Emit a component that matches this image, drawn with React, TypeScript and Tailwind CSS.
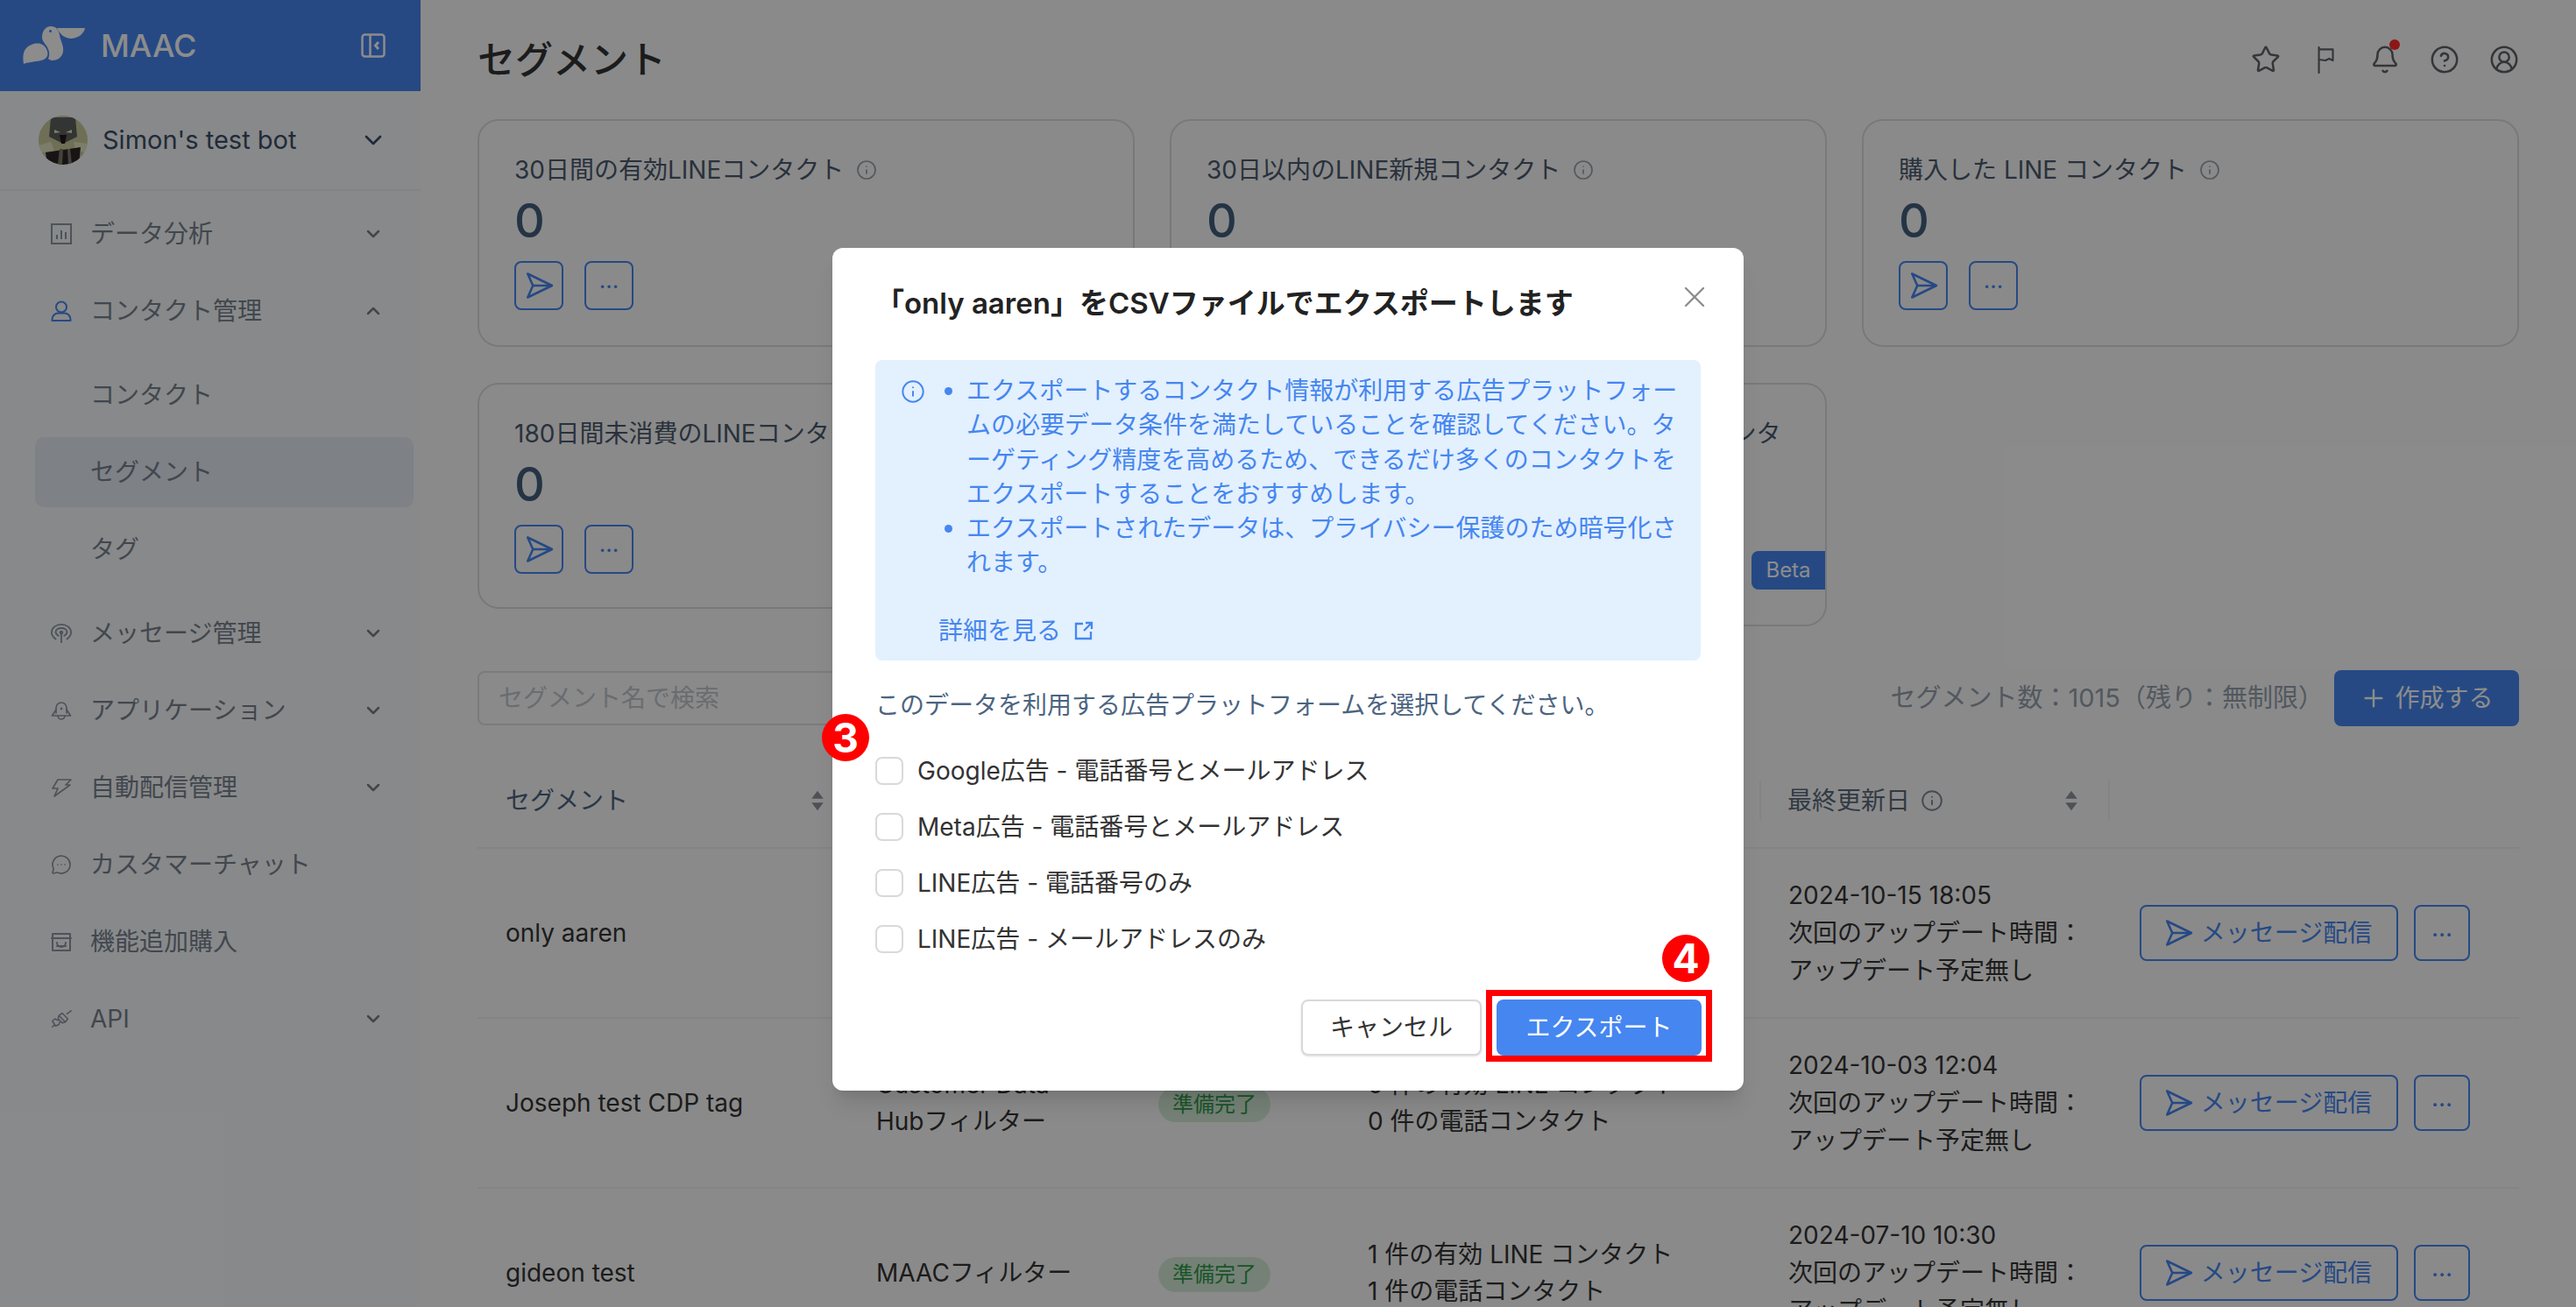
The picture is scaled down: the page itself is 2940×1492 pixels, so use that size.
import React from "react";
import { Bell, ChevronDown, ChevronUp, CircleHelp, CircleUserRound, Info, MessageCircleMore, Plus, Star, X } from "lucide-react";

const IconSend = ({ className }: { className: string }) => (
  <svg viewBox="0 0 24 24" fill="none" stroke="currentColor" strokeWidth="1.7" strokeLinejoin="round" className={className}>
    <path d="M3.500 3 22 12 3.500 21 7.500 12Z" />
    <path d="M7.500 12H22" />
  </svg>
);

const SortIcon = () => (
  <svg viewBox="0 0 16 24" fill="currentColor" className="w-[18px] h-[28px] text-[#8e949c]">
    <path d="M8 2 14 10H2Z" />
    <path d="M2 14H14L8 22Z" />
  </svg>
);

const Logo = () => (
  <svg viewBox="6 10 72 46" fill="white" className="w-[72px] h-[46px]">
    <path d="M7 54C5 42 8 35 16 32C24 29 30 31 33 37C36 43 34 47 30 49C22 52 14 51 7 54Z" />
    <path d="M28 24C28 15 33 11 38 11C44 11 47 15 48 21C49 28 53 33 52 40C51 46 46 50 40 50C37 50 35 48 35 48C38 42 35 36 32 32C30 29 28 27 28 24Z" />
    <path d="M45 13H77C76 20 68 25 61 25C54 25 48 20 45 13Z" />
    <circle cx="37.5" cy="16.5" r="1.5" fill="#4586f0" />
  </svg>
);

const Avatar = () => (
  <svg viewBox="0 0 56 56" className="w-14 h-14 rounded-full shrink-0">
    <rect width="56" height="56" fill="#c9cb9c" />
    <path d="M14 2 42 2 44 24 28 32 12 24Z" fill="#5d5f60" />
    <path d="M18 16 25 19 18 20ZM38 16 31 19 38 20Z" fill="#e4e6c0" />
    <path d="M24 22H32L30 32H26Z" fill="#241416" />
    <path d="M0 34 14 30 18 40 4 42Z" fill="#e4e6c0" />
    <path d="M40 30 56 32 54 42 42 40Z" fill="#e4e6c0" />
    <path d="M8 42 48 36 46 56H10Z" fill="#2c2426" />
    <path d="M24 38H28L27 56H22ZM33 38H36L38 56H34Z" fill="#7d7b6a" />
  </svg>
);

const stroke = { fill: "none", stroke: "currentColor", strokeWidth: 1.7, strokeLinecap: "round", strokeLinejoin: "round" } as const;

const navIcons: Record<string, React.ReactNode> = {
  chart: (
    <svg viewBox="0 0 24 24" {...stroke} strokeLinecap="butt" strokeLinejoin="miter" strokeWidth={2} className="w-6 h-6">
      <rect x="1" y="1" width="22" height="22" />
      <path d="M7 18v-5M12 18V8M17 18v-8" />
    </svg>
  ),
  user: (
    <svg viewBox="0 0 24 24" {...stroke} strokeWidth={2} className="w-6 h-6">
      <circle cx="12" cy="7.5" r="6" />
      <path d="M1.5 23v-1.5a7 7 0 0 1 7-7h7a7 7 0 0 1 7 7V23Z" />
    </svg>
  ),
  signal: (
    <svg viewBox="0 0 26 24" {...stroke} strokeWidth={2} className="w-[26px] h-6">
      <path d="M6 19C2.5 16.5 1 13.500 1 11 1 5 6.500 1 13 1s12 4 12 10c0 2.500-1.500 5.500-5 8" />
      <path d="M9.500 15C7.500 14 6 12.500 6 10.500 6 7.500 9 5.500 13 5.500s7 2 7 5c0 2-1.500 3.500-3.500 4.500" />
      <circle cx="13" cy="11" r="1.500" />
      <path d="M13 12v11" />
    </svg>
  ),
  rocket: (
    <svg viewBox="0 0 24 24" {...stroke} className="w-6 h-6">
      <path d="M6 15V9a6 6 0 0 1 12 0v6" />
      <path d="M6 11 1.500 18H22.500L18 11" />
      <path d="M8 18a4 4 0 0 0 8 0" />
      <circle cx="12" cy="10" r=".6" />
    </svg>
  ),
  bolt: (
    <svg viewBox="0 0 24 24" {...stroke} className="w-6 h-6">
      <path d="M8 3H23L17 9H22L4 22 8 13H2Z" />
    </svg>
  ),
  store: (
    <svg viewBox="0 0 24 24" {...stroke} strokeWidth={2} className="w-6 h-6">
      <path d="M2 8V3h20v5" />
      <path d="M1 8h22M2 8v14h20V8" />
      <path d="M7 13a3 3 0 0 0 10 0M7 17h10" />
    </svg>
  ),
  plug: (
    <svg viewBox="0 0 26 24" {...stroke} className="w-[26px] h-6">
      <path d="M10 8 18 16M14 5 21 12 18 16 14 17 9 12 10 8Z" />
      <path d="M20 6 25 2M9 14 5 12 2 15 6 21 10 19 11 16M2 22 4 20" />
    </svg>
  ),
};

const NavItem = ({ icon, label, open, active }: { icon: React.ReactNode; label: string; open?: boolean; active?: boolean }) => (
  <div className="h-20 flex items-center pl-[58px] pr-[42px] text-[28px] text-[#77828f]">
    <span className={`w-6 flex justify-center ${active ? "text-[#4586f0]" : "text-[#8d97a4]"}`}>{icon}</span>
    <span className="ml-[21px] flex-1">{label}</span>
    {open === true && <ChevronUp className="w-6 h-6 text-[#7a7f86]" strokeWidth={2.5} />}
    {open === false && <ChevronDown className="w-6 h-6 text-[#7a7f86]" strokeWidth={2.5} />}
  </div>
);

const SubItem = ({ label, active }: { label: string; active?: boolean }) => (
  <div className={`h-20 flex items-center ml-10 mr-2 pl-[63px] rounded-[10px] text-[28px] text-[#77828f] ${active ? "bg-[#e6ebf5]" : ""}`}>
    {label}
  </div>
);

const Sidebar = () => (
  <aside className="w-[480px] h-full shrink-0 bg-[#f8fafc]">
    <div className="h-[104px] bg-[#4586f0] flex items-center pl-[26px] pr-[40px] text-white">
      <Logo />
      <span className="ml-[17px] flex-1 text-[36px] font-medium">MAAC</span>
      <svg viewBox="0 0 28 28" fill="none" stroke="currentColor" strokeWidth="2.500" className="w-7 h-7">
        <rect x="1.500" y="1.500" width="25" height="25" rx="3" />
        <path d="M10.500 1.500v25" />
        <path d="M20 10l-3.500 4 3.500 4" strokeWidth="3" />
      </svg>
    </div>
    <div className="h-[114px] border-b-2 border-[#eceef1] flex items-center pl-11 pr-[38px]">
      <Avatar />
      <span className="ml-[17px] flex-1 text-[29px] text-[#3b4f68]">Simon's test bot</span>
      <ChevronDown className="w-8 h-8 text-[#3b4f68]" strokeWidth={2} />
    </div>
    <nav className="pt-[9px] flex flex-col gap-2">
      <NavItem icon={navIcons.chart} label="データ分析" open={false} />
      <NavItem icon={navIcons.user} label="コンタクト管理" open={true} active />
      <div className="my-2 flex flex-col gap-2">
        <SubItem label="コンタクト" />
        <SubItem label="セグメント" active />
        <SubItem label="タグ" />
      </div>
      <NavItem icon={navIcons.signal} label="メッセージ管理" open={false} />
      <NavItem icon={navIcons.rocket} label="アプリケーション" open={false} />
      <NavItem icon={navIcons.bolt} label="自動配信管理" open={false} />
      <NavItem icon={<MessageCircleMore className="w-[26px] h-[26px]" strokeWidth={1.7} />} label="カスタマーチャット" />
      <NavItem icon={navIcons.store} label="機能追加購入" />
      <NavItem icon={navIcons.plug} label="API" open={false} />
    </nav>
  </aside>
);

const SquareButton = ({ children }: { children: React.ReactNode }) => (
  <button className="w-14 h-14 flex items-center justify-center border-2 border-[#4586f0] rounded-[8px] text-[#4586f0]">
    {children}
  </button>
);

const Card = ({ title, className, noInfo, children }: { title: string; className?: string; noInfo?: boolean; children?: React.ReactNode }) => (
  <div className={`relative border-2 border-[#d9dde2] rounded-[24px] pl-[40px] pt-[38px] ${className ?? "h-[260px]"}`}>
    <div className="h-[36px] flex items-center gap-[14px] text-[28px] leading-[36px] text-[#4b5a6e] whitespace-nowrap">
      <span>{title}</span>
      {!noInfo && <Info className="w-6 h-6 text-[#99a2ad]" strokeWidth={1.7} />}
    </div>
    <div className="mt-[15px] h-[48px] flex items-center text-[54px] font-medium text-[#43607f]">0</div>
    <div className="mt-[23px] flex gap-[24px]">
      <SquareButton>
        <IconSend className="w-9 h-9" />
      </SquareButton>
      <SquareButton>
        <span className="text-[26px] leading-none -mt-3">...</span>
      </SquareButton>
    </div>
    {children}
  </div>
);

type Row = { name: string; filter: string; contacts: string[]; date: string };

const rows: Row[] = [
  { name: "only aaren", filter: "MAACフィルター", contacts: ["1 件の有効 LINE コンタクト", "1 件の電話コンタクト"], date: "2024-10-15 18:05" },
  { name: "Joseph test CDP tag", filter: "Customer Data Hubフィルター", contacts: ["0 件の有効 LINE コンタクト", "0 件の電話コンタクト"], date: "2024-10-03 12:04" },
  { name: "gideon test", filter: "MAACフィルター", contacts: ["1 件の有効 LINE コンタクト", "1 件の電話コンタクト"], date: "2024-07-10 10:30" },
];

const tableCols = "grid grid-cols-[423px_322px_239px_479px_400px_1fr]";

const Table = () => (
  <div className="mt-[32px] text-[28px]">
    <div className={`${tableCols} h-[108px] items-center border-b-2 border-[#eef0f3] text-[#4b6480]`}>
      <div className="pl-8 pr-[26px] flex justify-between items-center">
        <span>セグメント</span>
        <SortIcon />
      </div>
      <div className="pl-8">タイプ</div>
      <div className="pl-8">ステータス</div>
      <div className="pl-8">コンタクト</div>
      <div className="h-[46px] pl-[30px] pr-[33px] flex items-center border-x-2 border-[#eef0f3] text-[#5a6a7d]">
        <span>最終更新日</span>
        <Info className="ml-3 w-[26px] h-[26px] text-[#7e8a99]" strokeWidth={1.8} />
        <span className="ml-auto">
          <SortIcon />
        </span>
      </div>
      <div />
    </div>
    {rows.map((row) => (
      <div key={row.name} className={`${tableCols} h-[194px] items-center border-b-2 border-[#eef0f3] text-[#333333] leading-[42px]`}>
        <div className="pl-8">{row.name}</div>
        <div className="pl-8 pr-8">{row.filter}</div>
        <div className="pl-8">
          <span className="inline-flex h-10 w-32 items-center justify-center rounded-full bg-[#d6ecd9] text-[24px] text-[#2e9a47]">準備完了</span>
        </div>
        <div className="pl-8">
          {row.contacts.map((c) => (
            <div key={c}>{c}</div>
          ))}
        </div>
        <div className="pl-[33px] leading-[43px]">
          <div>{row.date}</div>
          <div>次回のアップデート時間：</div>
          <div>アップデート予定無し</div>
        </div>
        <div className="pl-[34px] flex gap-[18px]">
          <button className="w-[295px] h-16 pr-1 flex items-center justify-center gap-2 border-2 border-[#4586f0] rounded-[8px] text-[#4586f0]">
            <IconSend className="w-9 h-9" />
            メッセージ配信
          </button>
          <button className="w-16 h-16 border-2 border-[#4586f0] rounded-[8px] text-[#4586f0] leading-none">
            <span className="block -mt-3">...</span>
          </button>
        </div>
      </div>
    ))}
  </div>
);

const Main = () => (
  <main className="flex-1 min-w-0 h-full bg-[#fcfcfc] px-[65px]">
    <header className="h-[136px] flex items-center justify-between">
      <h1 className="text-[43px] font-medium text-[#333333]">セグメント</h1>
      <div className="flex items-center gap-[34px] text-[#5f6368]">
        <Star className="w-[34px] h-[34px]" strokeWidth={1.8} />
        <svg viewBox="0 0 24 32" fill="none" stroke="currentColor" strokeWidth="2" strokeLinejoin="round" className="w-[34px] h-[34px]">
          <path d="M5 2v29" />
          <path d="M5 5h15v12l-4-2-4 2-7-1" />
        </svg>
        <div className="relative">
          <Bell className="w-[34px] h-[34px]" strokeWidth={1.8} />
          <span className="absolute -top-[6px] right-0 w-3 h-3 rounded-full bg-[#ff2b2b]" />
        </div>
        <CircleHelp className="w-[34px] h-[34px]" strokeWidth={1.8} />
        <CircleUserRound className="w-[34px] h-[34px]" strokeWidth={1.8} />
      </div>
    </header>
    <div className="grid grid-cols-3 gap-x-10 gap-y-[41px] items-start">
      <Card title="30日間の有効LINEコンタクト" />
      <Card title="30日以内のLINE新規コンタクト" />
      <Card title="購入した LINE コンタクト" />
      <Card title="180日間未消費のLINEコンタクト" className="h-[258px]" />
      <Card title="過去180日以内に購入履歴のない有効な LINE コンタ" className="h-[278px]" noInfo>
        <span className="absolute right-0 top-[190px] w-[84px] h-[44px] flex items-center justify-center rounded-l-[8px] bg-[#4586f0] text-[24px] text-white">Beta</span>
      </Card>
    </div>
    <div className="mt-[50px] flex items-center justify-between">
      <div className="w-[720px] h-[62px] border-2 border-[#dde0e4] rounded-[8px] pl-[22px] flex items-center text-[28px] text-[#c2c6cc]">
        セグメント名で検索
      </div>
      <div className="flex items-center gap-[12px]">
        <span className="text-[29px] text-[#96a1ae]">セグメント数：1015（残り：無制限）</span>
        <button className="w-[211px] h-16 flex items-center justify-center gap-2 rounded-[8px] bg-[#4586f0] text-[28px] text-white">
          <Plus className="w-8 h-8" strokeWidth={1.8} />
          作成する
        </button>
      </div>
    </div>
    <Table />
  </main>
);

const adOptions = ["Google広告 - 電話番号とメールアドレス", "Meta広告 - 電話番号とメールアドレス", "LINE広告 - 電話番号のみ", "LINE広告 - メールアドレスのみ"];

const Step = ({ n, className }: { n: number; className: string }) => (
  <span className={`absolute w-[54px] h-[54px] rounded-full bg-[#ff0000] flex items-center justify-center text-[46px] font-bold text-white ${className}`}>{n}</span>
);

const ExportModal = () => (
  <div className="absolute inset-0 bg-black/45 flex justify-center items-start pt-[283px]">
    <div className="relative w-[1040px] h-[962px] rounded-[12px] bg-white pt-[46px] px-[49px] shadow-xl">
      <button className="absolute right-[36px] top-[36px] text-[#8c8c8c]">
        <X className="w-10 h-10" strokeWidth={1.4} />
      </button>
      <h2 className="h-[36px] flex items-center text-[33px] font-semibold text-[#222222] whitespace-nowrap">「only aaren」をCSVファイルでエクスポートします</h2>
      <div className="mt-[46px] h-[343px] rounded-[8px] bg-[#e3f0fe] text-[28px] leading-[39.300px] text-[#4586f0] pt-4 pl-[29px] flex">
        <Info className="w-7 h-7 mt-[6px] shrink-0" strokeWidth={1.7} />
        <div className="ml-[47px]">
          <ul className="list-disc whitespace-nowrap">
            <li>
              エクスポートするコンタクト情報が利用する広告プラットフォー
              <br />
              ムの必要データ条件を満たしていることを確認してください。タ
              <br />
              ーゲティング精度を高めるため、できるだけ多くのコンタクトを
              <br />
              エクスポートすることをおすすめします。
            </li>
            <li>
              エクスポートされたデータは、プライバシー保護のため暗号化さ
              <br />
              れます。
            </li>
          </ul>
          <a className="mt-[38px] -ml-[32px] flex items-center gap-[14px]">
            詳細を見る
            <svg viewBox="0 0 24 24" fill="none" stroke="currentColor" strokeWidth="2.300" className="w-6 h-6">
              <path d="M11 4H3v17h17v-8" />
              <path d="M14 3h7v7M21 3l-9 9" />
            </svg>
          </a>
        </div>
      </div>
      <p className="mt-[33px] text-[28px] leading-[36px] text-[#4b6480]">このデータを利用する広告プラットフォームを選択してください。</p>
      <div className="mt-[41px] flex flex-col gap-8">
        {adOptions.map((opt) => (
          <label key={opt} className="h-8 flex items-center gap-4 text-[28px] text-[#333333]">
            <input type="checkbox" className="appearance-none w-8 h-8 border-2 border-[#d9d9d9] rounded-[8px] bg-white" />
            {opt}
          </label>
        ))}
      </div>
      <div className="absolute right-[48px] bottom-[40px] flex gap-[17px] text-[28px]">
        <button className="w-[206px] h-16 rounded-[8px] border-2 border-[#d9d9d9] bg-white text-[#333333] shadow-sm">キャンセル</button>
        <button className="w-[234px] h-16 rounded-[8px] bg-[#4586f0] text-white">エクスポート</button>
      </div>
      <span className="absolute left-[746px] top-[847px] w-[258px] h-[82px] border-[7px] border-[#ff0000]" />
      <Step n={3} className="left-[-12px] top-[532px]" />
      <Step n={4} className="left-[947px] top-[784px]" />
    </div>
  </div>
);

export default function App() {
  return (
    <div className="relative flex w-[2940px] h-[1492px] overflow-hidden font-['Inter','Noto_Sans_CJK_JP',sans-serif]">
      <Sidebar />
      <Main />
      <ExportModal />
    </div>
  );
}
